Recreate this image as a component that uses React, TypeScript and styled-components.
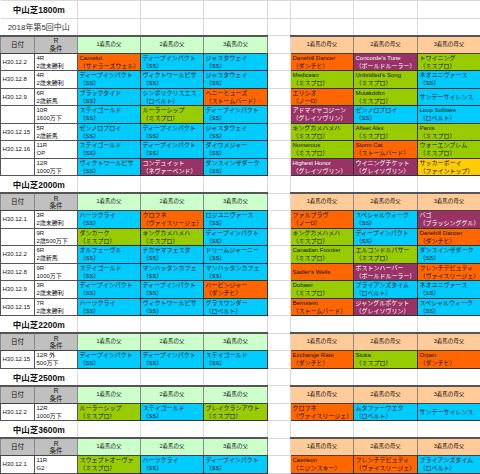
import React from "react";
import styled, { createGlobalStyle } from "styled-components";

type Tone = "o" | "b" | "g" | "p" | "y";
type Horse = [string, string | null, Tone];

interface RaceRow {
    date: string;
    race: string;
    cond: string;
    sires: Horse[];
    dams: Horse[];
}

interface Section {
    course: string;
    dist: string;
    sub?: string;
    rows: RaceRow[];
}

const COLORS: Record<Tone, string> = {
    o: "#ff6600",
    b: "#00ccff",
    g: "#99cc00",
    p: "#993366",
    y: "#ffcc00",
};

const SS = "（SS）";
const MP = "（ミスプロ）";

const sections: Section[] = [
    {
        course: "中山芝",
        dist: "1800m",
        sub: "2018年第5回中山",
        rows: [
            {
                date: "H30.12.2", race: "4R", cond: "2歳未勝利",
                sires: [["Camelot", "（サドラーズウェル）", "o"], ["ディープインパクト", SS, "b"], ["ジャスタウェイ", SS, "b"]],
                dams: [["Danehill Dancer", "（ダンチヒ）", "o"], ["Concorde's Tune", "（ボールドルーラー）", "p"], ["トワイニング", MP, "g"]],
            },
            {
                date: "H30.12.8", race: "4R", cond: "2歳未勝利",
                sires: [["ディープインパクト", SS, "b"], ["ヴィクトワールピサ", SS, "b"], ["ジャスタウェイ", SS, "b"]],
                dams: [["Medicean", MP, "g"], ["Unbridled's Song", MP, "g"], ["ネオユニヴァース", SS, "b"]],
            },
            {
                date: "H30.12.9", race: "6R", cond: "2歳新馬",
                sires: [["ブラックタイド", SS, "b"], ["シンボリクリスエス", "（ロベルト）", "b"], ["ヘニーヒューズ", "（ストームバード）", "o"]],
                dams: [["エリシオ", "（ノーD）", "o"], ["Mutakddim", MP, "g"], ["サンデーサイレンス", null, "b"]],
            },
            {
                date: "", race: "10R", cond: "1600万下",
                sires: [["ステイゴールド", SS, "b"], ["ルーラーシップ", MP, "g"], ["ディープインパクト", SS, "b"]],
                dams: [["アドマイヤコジーン", "（グレイソヴリン）", "p"], ["ゼンノロブロイ", SS, "b"], ["Loup Solitaire", "（ロベルト）", "b"]],
            },
            {
                date: "H30.12.15", race: "5R", cond: "2歳新馬",
                sires: [["ゼンノロブロイ", SS, "b"], ["ディープインパクト", SS, "b"], ["ジャスタウェイ", SS, "b"]],
                dams: [["キングカメハメハ", MP, "g"], ["Afleet Alex", MP, "g"], ["Panis", MP, "g"]],
            },
            {
                date: "H30.12.16", race: "11R", cond: "OP",
                sires: [["ステイゴールド", SS, "b"], ["ディープインパクト", SS, "b"], ["ダイワメジャー", SS, "b"]],
                dams: [["Numerous", MP, "g"], ["Storm Cat", "（ストームバード）", "o"], ["ウォーエンブレム", MP, "g"]],
            },
            {
                date: "", race: "12R", cond: "1000万下",
                sires: [["ヴィクトワールピサ", SS, "b"], ["コンデュイット", "（ネヴァーベンド）", "p"], ["ダンスインザダーク", SS, "b"]],
                dams: [["Highest Honor", "（グレイソヴリン）", "p"], ["ウイニングチケット", "（グレイソヴリン）", "p"], ["サッカーボーイ", "（ファイントップ）", "y"]],
            },
        ],
    },
    {
        course: "中山芝",
        dist: "2000m",
        rows: [
            {
                date: "H30.12.1", race: "3R", cond: "2歳未勝利",
                sires: [["ハーツクライ", SS, "b"], ["クロフネ", "（ヴァイスリージェ）", "o"], ["ロジユニヴァース", SS, "b"]],
                dams: [["ファルブラヴ", "（ノーD）", "o"], ["スペシャルウィーク", SS, "b"], ["バゴ", "（ブラッシンググル）", "p"]],
            },
            {
                date: "", race: "9R", cond: "2歳500万下",
                sires: [["ダンカーク", MP, "g"], ["キングカメハメハ", MP, "g"], ["ディープインパクト", SS, "b"]],
                dams: [["キングカメハメハ", MP, "g"], ["ディープインパクト", SS, "b"], ["Danehill Dancer", "（ダンチヒ）", "o"]],
            },
            {
                date: "H30.12.2", race: "6R", cond: "2歳新馬",
                sires: [["オルフェーヴル", SS, "b"], ["ナカヤマフェスタ", SS, "b"], ["ドリームジャーニー", SS, "b"]],
                dams: [["Canadian Frontier", MP, "g"], ["エルコンドルパサー", MP, "g"], ["ダンスインザダーク", SS, "b"]],
            },
            {
                date: "H30.12.8", race: "9R", cond: "1000万下",
                sires: [["ステイゴールド", SS, "b"], ["マンハッタンカフェ", SS, "b"], ["マンハッタンカフェ", SS, "b"]],
                dams: [["Sadler's Wells", null, "o"], ["ボストンハーバー", "（ボールドルーラー）", "p"], ["フレンチデピュティ", "（ヴァイスリージェ）", "o"]],
            },
            {
                date: "H30.12.9", race: "3R", cond: "2歳未勝利",
                sires: [["ディープインパクト", SS, "b"], ["ディープインパクト", SS, "b"], ["ハービンジャー", "（ダンチヒ）", "o"]],
                dams: [["Dubawi", MP, "g"], ["ブライアンズタイム", "（ロベルト）", "b"], ["ネオユニヴァース", SS, "b"]],
            },
            {
                date: "H30.12.15", race: "7R", cond: "2歳未勝利",
                sires: [["ハーツクライ", SS, "b"], ["ヴィクトワールピサ", SS, "b"], ["グラスワンダー", "（ロベルト）", "b"]],
                dams: [["Bernstein", "（ストームバード）", "o"], ["ジャングルポケット", "（グレイソヴリン）", "p"], ["スペシャルウィーク", SS, "b"]],
            },
        ],
    },
    {
        course: "中山芝",
        dist: "2200m",
        rows: [
            {
                date: "H30.12.15", race: "12R 外", cond: "500万下",
                sires: [["ディープインパクト", SS, "b"], ["ディープインパクト", SS, "b"], ["ステイゴールド", SS, "b"]],
                dams: [["Exchange Rate", "（ダンチヒ）", "o"], ["Stuka", MP, "g"], ["Orpen", "（ダンチヒ）", "o"]],
            },
        ],
    },
    {
        course: "中山芝",
        dist: "2500m",
        rows: [
            {
                date: "H30.12.2", race: "12R", cond: "1000万下",
                sires: [["ルーラーシップ", MP, "g"], ["ステイゴールド", SS, "b"], ["ブレイクランアウト", MP, "g"]],
                dams: [["クロフネ", "（ヴァイスリージェ）", "o"], ["ムタファーウエク", "（ロベルト）", "b"], ["サンデーサイレンス", null, "b"]],
            },
        ],
    },
    {
        course: "中山芝",
        dist: "3600m",
        rows: [
            {
                date: "H30.12.1", race: "11R", cond: "G2",
                sires: [["スウェプトオーヴァ", MP, "g"], ["ハーツクライ", SS, "b"], ["ディープインパクト", SS, "b"]],
                dams: [["Caerleon", "（ニジンスキー）", "o"], ["フレンチデピュティ", "（ヴァイスリージェ）", "o"], ["ブライアンズタイム", "（ロベルト）", "b"]],
            },
        ],
    },
];

const WIDTHS = [34, 43, 63, 63, 64, 23, 63, 64, 63];

const GlobalStyle = createGlobalStyle`
    body{
        margin:0;
        background:#fff;
        font-family:"Liberation Sans","Noto Sans CJK JP",sans-serif;
        color:#111;
    }
`;

const Sheet = styled.table`
    width:480px;
    border-collapse:collapse;
    table-layout:fixed;
`;

const Row = styled.tr`
    height:17.5px;
`;

const Blank = styled.td`
    border:1px solid #d9d9d9;
    padding:0;
`;

const TitleCell = styled.td`
    border:1px solid #d9d9d9;
    border-left:none;
    text-align:center;
    font-size:8.5px;
    font-weight:bold;
    padding:0;
    white-space:nowrap;
`;

const SubCell = styled(TitleCell)`
    font-weight:normal;
    font-size:8px;
    color:#333;
`;

const HeadCell = styled.td<{ $tone: "gray" | "green" | "peach" }>`
    background:${p => (p.$tone === "gray" ? "#c0c0c0" : p.$tone === "green" ? "#ccffcc" : "#ffcc99")};
    border:1px solid #8a8a8a;
    border-top:2px solid #555;
    border-bottom:1px solid #444;
    text-align:center;
    font-size:${p => (p.$tone === "gray" ? "6.5px" : "5.5px")};
    line-height:7.5px;
    padding:0;
    white-space:nowrap;
`;

const InfoCell = styled.td`
    border:1px solid #555;
    font-size:6px;
    line-height:8px;
    padding:0 0 0 1.5px;
    white-space:nowrap;
    overflow:hidden;
    vertical-align:middle;
`;

const HorseCell = styled.td<{ $tone: Tone }>`
    background:${p => COLORS[p.$tone]};
    color:${p => (p.$tone === "p" ? "#fff" : "#111")};
    border:1px solid #333;
    font-size:6px;
    line-height:8px;
    padding:0 0 0 1.5px;
    white-space:nowrap;
    overflow:hidden;
    vertical-align:middle;
`;

const Line = styled.div`
    height:8px;
`;

function HorseBox({ horse }: { horse: Horse }) {
    const [name, line, tone] = horse;
    return (
        <HorseCell $tone={tone}>
            <Line>{name}</Line>
            {line && <Line>{line}</Line>}
        </HorseCell>
    );
}

function blanks(n: number) {
    return Array.from({ length: n }, (_, i) => <Blank key={i} />);
}

function Block({ section }: { section: Section }) {
    return (
        <>
            <Row>
                <TitleCell colSpan={2}>
                    {section.course}
                    {section.dist}
                </TitleCell>
                {blanks(7)}
            </Row>
            {section.sub && (
                <Row>
                    <SubCell colSpan={2}>{section.sub}</SubCell>
                    {blanks(7)}
                </Row>
            )}
            <Row>
                <HeadCell $tone="gray">日付</HeadCell>
                <HeadCell $tone="gray">
                    R
                    <br />
                    条件
                </HeadCell>
                {[1, 2, 3].map(n => (
                    <HeadCell key={n} $tone="green">{n}着馬の父</HeadCell>
                ))}
                <Blank />
                {[1, 2, 3].map(n => (
                    <HeadCell key={n} $tone="peach">{n}着馬の母父</HeadCell>
                ))}
            </Row>
            {section.rows.map((r, i) => (
                <Row key={i}>
                    <InfoCell>{r.date}</InfoCell>
                    <InfoCell>
                        <Line>{r.race}</Line>
                        <Line>{r.cond}</Line>
                    </InfoCell>
                    {r.sires.map((h, j) => (
                        <HorseBox key={j} horse={h} />
                    ))}
                    <Blank />
                    {r.dams.map((h, j) => (
                        <HorseBox key={j} horse={h} />
                    ))}
                </Row>
            ))}
        </>
    );
}

export default function App() {
    return (
        <>
            <GlobalStyle />
            <Sheet>
                <colgroup>
                    {WIDTHS.map((w, i) => (
                        <col key={i} style={{ width: w }} />
                    ))}
                </colgroup>
                <tbody>
                    {sections.map(s => (
                        <Block key={s.dist} section={s} />
                    ))}
                </tbody>
            </Sheet>
        </>
    );
}
